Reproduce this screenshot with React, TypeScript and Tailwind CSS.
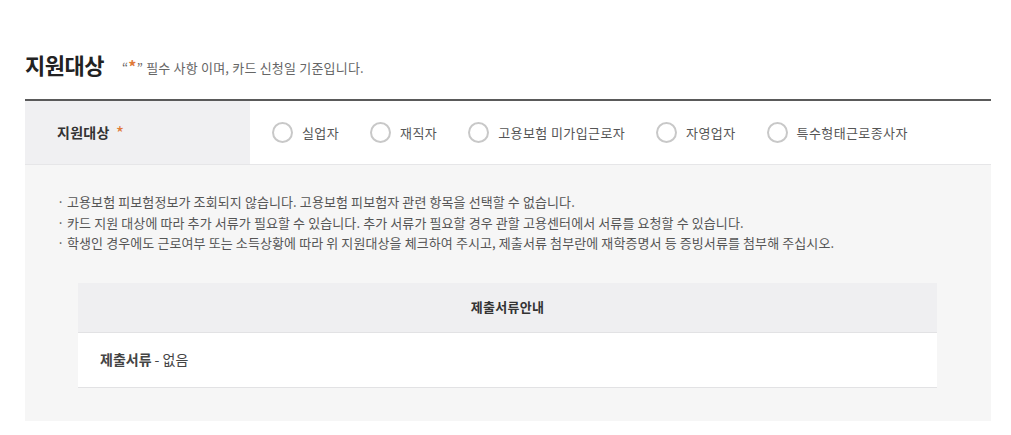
import React from "react";

const font = { fontFamily: '"Noto Sans CJK KR", "Noto Sans", sans-serif' };

const options = ["실업자", "재직자", "고용보험 미가입근로자", "자영업자", "특수형태근로종사자"];

function Radio({ label }: { label: string }) {
  return (
    <label className="flex items-center">
      <span className="w-[21px] h-[21px] rounded-full border-2 border-[#c8c8c8] bg-white box-border" />
      <span className="ml-[9px] text-[13px] text-[#555] leading-none tracking-[0.4px]">{label}</span>
    </label>
  );
}

export default function App() {
  return (
    <div className="w-[1011px] h-[435px] bg-white" style={font}>
      <div className="pl-[25px] pr-[20px]">
        <div className="h-[99px] flex items-end pb-[24px]">
          <h2 className="text-[22px] font-bold text-[#222] leading-none tracking-[-0.5px]">지원대상</h2>
          <p className="ml-[18px] text-[13px] text-[#666] leading-none tracking-[0.2px] pb-[1px]">
            “<span className="text-[#e07b39] text-[16px] font-bold">*</span>” 필수 사항 이며, 카드 신청일 기준입니다.
          </p>
        </div>
        <div className="border-t-2 border-[#5a5a5a]">
          <div className="flex h-[64px] border-b border-[#e6e6e8]">
            <div className="w-[225px] bg-[#f0f0f2] flex items-center pl-[32px] text-[14px] text-[#333] font-semibold tracking-[0.3px]">
              지원대상 <span className="ml-[6px] text-[#e07b39] text-[18px] font-normal">*</span>
            </div>
            <div className="flex-1 flex items-center pl-[22px] gap-[31px]">
              {options.map((o) => (
                <Radio key={o} label={o} />
              ))}
            </div>
          </div>
          <div className="bg-[#f6f6f6] pt-[27px] pb-[33px]">
            <ul className="pl-[32px] text-[13px] text-[#555] leading-[20.5px] tracking-[0.1px]">
              <li className="flex"><span className="w-[10px]">·</span>고용보험 피보험정보가 조회되지 않습니다. 고용보험 피보험자 관련 항목을 선택할 수 없습니다.</li>
              <li className="flex"><span className="w-[10px]">·</span>카드 지원 대상에 따라 추가 서류가 필요할 수 있습니다. 추가 서류가 필요할 경우 관할 고용센터에서 서류를 요청할 수 있습니다.</li>
              <li className="flex"><span className="w-[10px]">·</span>학생인 경우에도 근로여부 또는 소득상황에 따라 위 지원대상을 체크하여 주시고, 제출서류 첨부란에 재학증명서 등 증빙서류를 첨부해 주십시오.</li>
            </ul>
            <div className="mt-[29px] ml-[53px] w-[859px]">
              <div className="h-[50px] bg-[#efeff1] border-b border-[#e2e2e4] flex items-center justify-center text-[13px] text-[#333] font-semibold tracking-[0.3px]">
                제출서류안내
              </div>
              <div className="h-[55px] bg-white border-b border-[#e2e2e4] flex items-center pl-[22px] text-[14px] text-[#444]">
                <span className="font-bold text-[#444]">제출서류</span>
                <span className="ml-[3px]">- 없음</span>
              </div>
            </div>
          </div>
        </div>
      </div>
    </div>
  );
}
